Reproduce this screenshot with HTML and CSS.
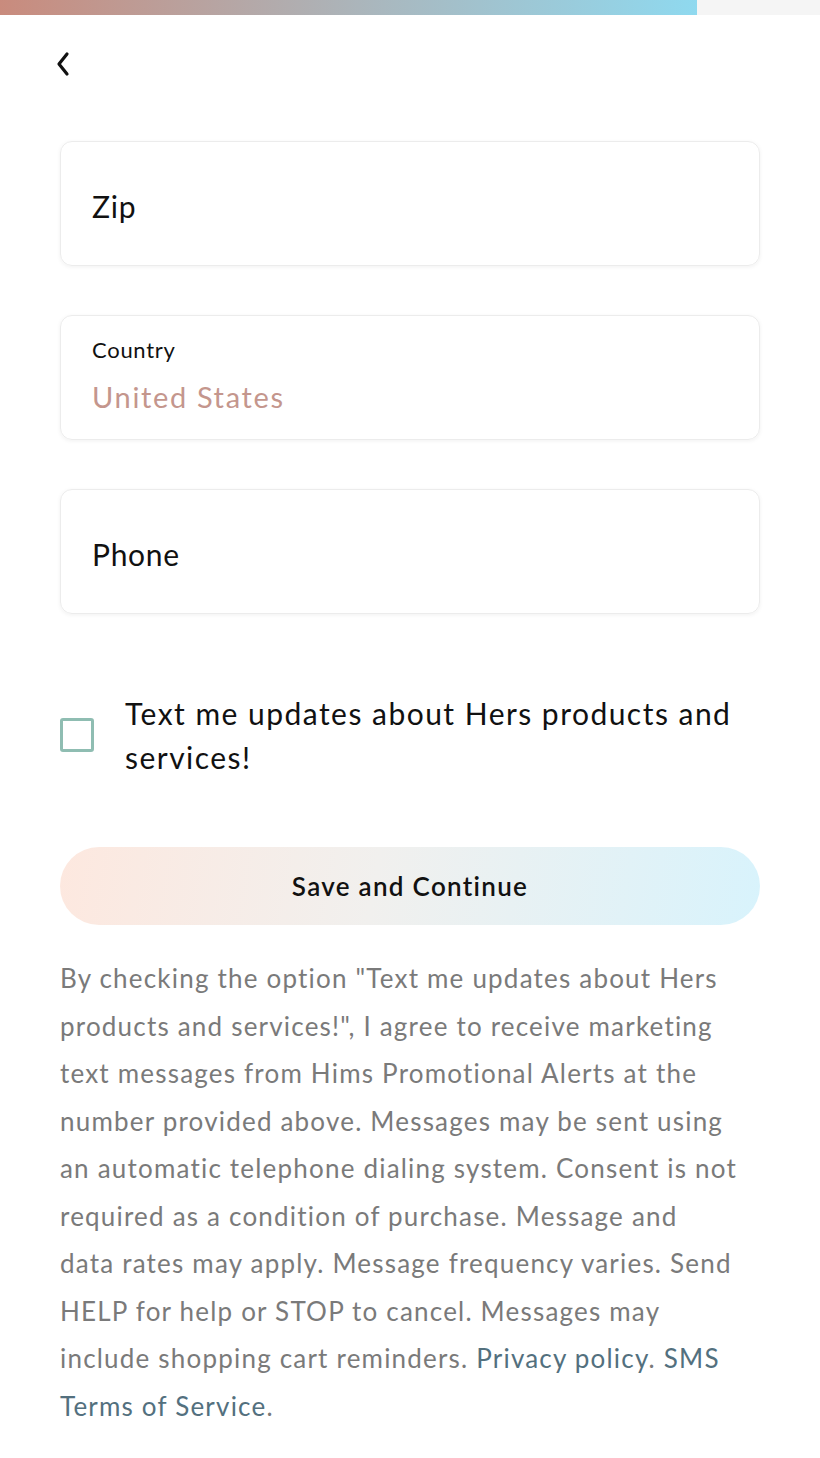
FILE: index.html
```html
<!DOCTYPE html>
<html lang="en">
<head>
    <meta charset="UTF-8">
    <meta name="viewport" content="width=device-width, initial-scale=1.0">
    <title>Shipping - Hers</title>
    <link rel="stylesheet" href="styles.css">
</head>
<body>

    <!-- Barra de progresso -->
    <div class="progress"><div class="progress-fill"></div></div>

    <div class="page">
        <button class="back" aria-label="Back">
            <svg width="18" height="28" viewBox="0 0 18 28"><path d="M13 4 L5 14 L13 24" fill="none" stroke="#111" stroke-width="3.2" stroke-linecap="round" stroke-linejoin="round"/></svg>
        </button>

        <div class="field"><span class="placeholder">Zip</span></div>

        <div class="field field-filled">
            <span class="label">Country</span>
            <span class="value">United States</span>
        </div>

        <div class="field"><span class="placeholder">Phone</span></div>

        <label class="optin">
            <span class="checkbox"></span>
            <span class="optin-text">Text me updates about Hers products and services!</span>
        </label>

        <button class="save">Save and Continue</button>

        <p class="legal">By checking the option "Text me updates about Hers products and services!", I agree to receive marketing text messages from Hims Promotional Alerts at the number provided above. Messages may be sent using an automatic telephone dialing system. Consent is not required as a condition of purchase. Message and<br>data rates may apply. Message frequency varies. Send HELP for help or STOP to cancel. Messages may include shopping cart reminders. <a href="#">Privacy policy</a>. <a href="#">SMS Terms of Service</a>.</p>
    </div>

</body>
</html>
```
FILE: styles.css
```css
body { margin: 0; font-family: Lato, "Open Sans", sans-serif; letter-spacing: 0.72px; color: #111; background: #fff; }
.progress { height: 15px; background: #f5f5f5; }
.progress-fill { width: 697px; height: 100%; background: linear-gradient(90deg, #c98b7d 0%, #a9b8bf 55%, #8fd9ef 100%); }
.page { padding: 0 60px; }
.back { display: block; background: none; border: none; padding: 0; margin: 35px 0 0 -6px; height: 28px; cursor: pointer; }
.field { height: 125px; box-sizing: border-box; border: 1px solid #ececec; border-radius: 12px; box-shadow: 0 1px 4px rgba(0,0,0,0.06); padding: 0 31px; display: flex; flex-direction: column; justify-content: center; margin-top: 49px; }
.back + .field { margin-top: 63px; }
.placeholder { font-size: 30px; margin-top: 4px; }
.label { font-size: 22px; margin-top: -6px; }
.value { font-size: 29px; color: #c4968d; margin-top: 16px; letter-spacing: 1.65px; }
.optin { display: flex; align-items: center; margin-top: 77px; cursor: pointer; }
.checkbox { flex: none; width: 28px; height: 28px; border: 3px solid #8fbdb2; border-radius: 3px; margin-right: 31px; }
.optin-text { font-size: 30px; line-height: 44px; letter-spacing: 1.47px; }
.save { display: block; width: 100%; height: 78px; margin-top: 68px; border: none; border-radius: 39px; background: linear-gradient(100deg, #fde8df 0%, #f1f0ee 45%, #d8f3fc 100%); font-family: inherit; letter-spacing: 1.3px; font-size: 26px; font-weight: 600; color: #111; cursor: pointer; }
.legal { margin: 30px 0 0; max-width: 694px; font-size: 26px; line-height: 47.5px; letter-spacing: 1.2px; color: #7a7a7a; }
.legal a { color: #53707e; text-decoration: none; }
```
